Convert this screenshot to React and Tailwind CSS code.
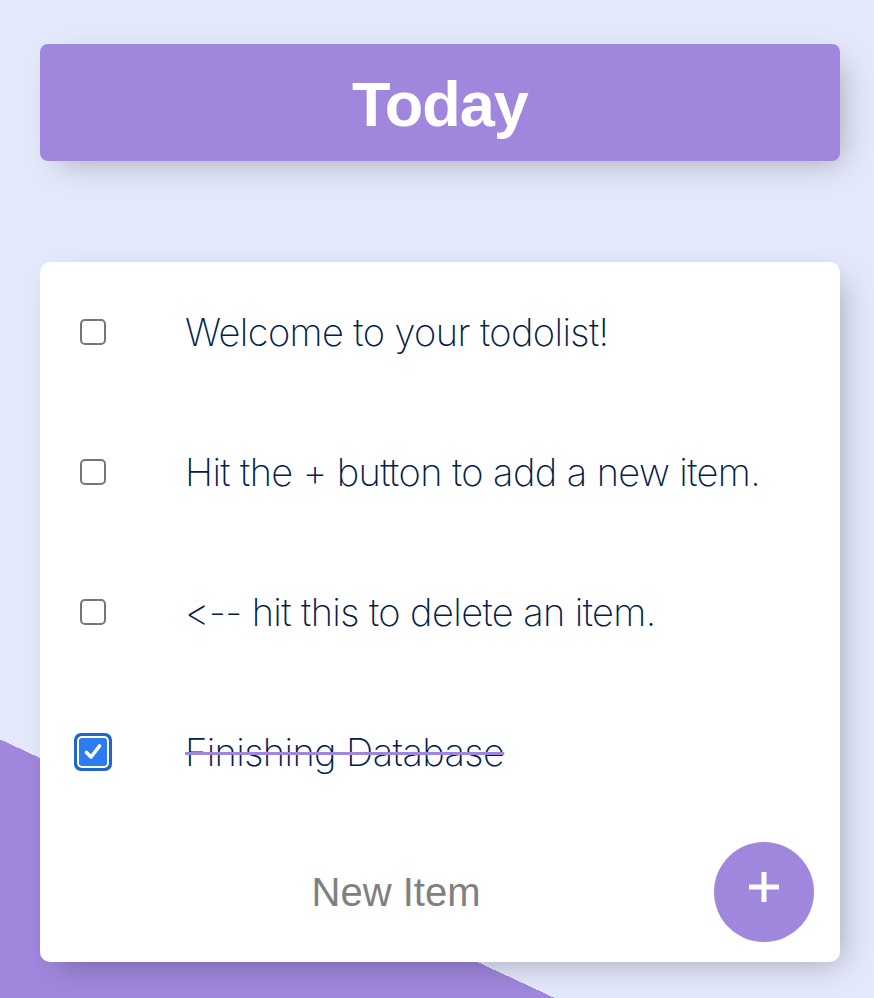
import React from "react";

const items = [
  { text: "Welcome to your todolist!", done: false },
  { text: "Hit the + button to add a new item.", done: false },
  { text: "<-- hit this to delete an item.", done: false },
  { text: "Finishing Database", done: true },
];

function Box({ done }) {
  if (done) {
    return (
      <div className="w-[38px] h-[38px] rounded-[7px] bg-[#1f66cc] p-[3px]">
        <div className="w-full h-full rounded-[5px] bg-white p-[2px]">
          <div className="w-full h-full rounded-[3px] bg-[#2b7cf0] flex items-center justify-center">
            <svg width="20" height="20" viewBox="0 0 20 20">
              <path d="M3.5 10.5 L8 15 L16.5 4" fill="none" stroke="white" strokeWidth="3.6" strokeLinecap="round" strokeLinejoin="round" />
            </svg>
          </div>
        </div>
      </div>
    );
  }
  return (
    <div className="w-[38px] h-[38px] flex items-center justify-center">
      <div className="w-[26px] h-[26px] rounded-[5px] border-2 border-[#767676] bg-white" />
    </div>
  );
}

export default function App() {
  return (
    <div
      className="h-[998px] w-full overflow-hidden bg-[linear-gradient(25deg,#A086DC_18.4%,#E4E8FB_18.4%)] pt-[44px]"
      style={{ fontFamily: "'Liberation Sans', Arial, sans-serif" }}
    >
      <div className="ml-[40px] w-[800px] h-[117px] rounded-[8px] bg-[#A086DC] flex items-center justify-center shadow-[10px_10px_30px_-10px_rgba(0,0,0,0.3)]">
        <h1 className="text-white font-bold text-[63px] leading-none tracking-[-1px] mt-[4px]">Today</h1>
      </div>

      <div className="ml-[40px] w-[800px] mt-[101px] h-[700px] rounded-[10px] bg-white shadow-[10px_10px_30px_-10px_rgba(0,0,0,0.3)] flex flex-col">
        {items.map((it, i) => (
          <div key={i} className="h-[140px] flex items-center pl-[34px]">
            <Box done={it.done} />
            <p
              className={
                "ml-[73px] text-[38px] text-[#00204a] " +
                (it.done ? "line-through decoration-[#A086DC] decoration-[3px]" : "")
              }
              style={{ fontFamily: "Inter, 'Liberation Sans', sans-serif", fontWeight: 200, letterSpacing: "-0.6px" }}
            >
              {it.text}
            </p>
          </div>
        ))}
        <div className="h-[140px] flex items-center pl-[43px]">
          <div className="w-[626px] text-center text-[40px] text-[#808080]">New Item</div>
          <div className="ml-[5px] w-[100px] h-[100px] rounded-full bg-[#A086DC] flex items-center justify-center">
            <svg width="30" height="30" viewBox="0 0 30 30" className="-mt-[10px]">
              <rect x="12.5" y="0" width="5" height="30" fill="white" />
              <rect x="0" y="12.5" width="30" height="5" fill="white" />
            </svg>
          </div>
        </div>
      </div>
    </div>
  );
}
